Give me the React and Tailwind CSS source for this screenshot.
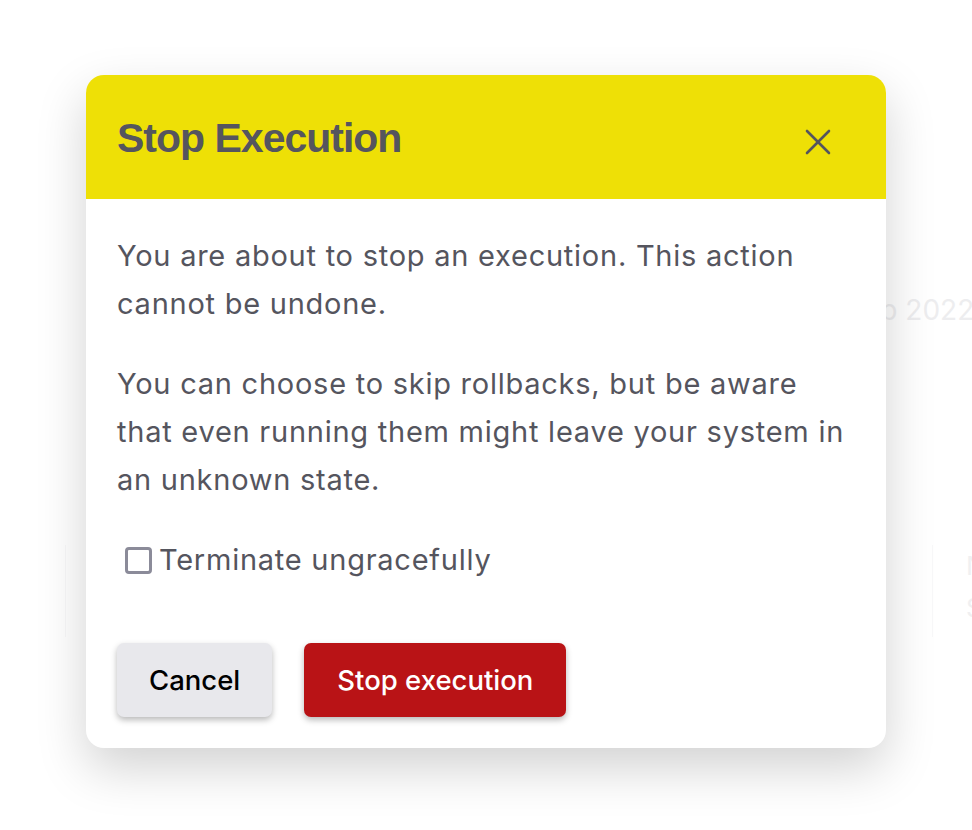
import { useState } from 'react'

function CloseIcon() {
  return (
    <svg width="26" height="26" viewBox="0 0 26 26" fill="none" stroke="currentColor" strokeWidth="2.6" strokeLinecap="round">
      <line x1="2" y1="2" x2="24" y2="24" />
      <line x1="24" y1="2" x2="2" y2="24" />
    </svg>
  )
}

export default function App() {
  const [skipRollbacks, setSkipRollbacks] = useState(false)

  return (
    <div className="relative min-h-screen bg-white overflow-hidden font-['Inter','Noto_Sans',sans-serif]">
      {/* page behind the dialog */}
      <div className="pt-[290px]">
        <div className="ml-[846px] whitespace-nowrap text-[28px] leading-[40px] text-[#e2e2e4]">Sep 2022</div>
        <div className="mt-[215px] ml-[65px] flex whitespace-nowrap">
          <div className="shrink-0 w-[867px] h-[92px] border-l border-[#f4f4f5]" />
          <div className="shrink-0 h-[92px] border-l border-[#f4f4f5] pl-[33px] text-[26px] leading-[42px] text-[#e6e6e8]">
            <div>Name</div>
            <div>Status</div>
          </div>
        </div>
      </div>

      {/* overlay */}
      <div className="absolute inset-0 bg-white/40" />

      {/* dialog */}
      <div className="absolute inset-0 flex items-start justify-center pt-[75px]">
        <div className="w-[800px] bg-white rounded-[18px] shadow-[0_20px_50px_rgba(0,0,0,0.18)] overflow-hidden">
          <div className="h-[124px] bg-[#eee006] flex items-center justify-between pl-[31px] pr-[55px]">
            <h2 className="font-['Liberation_Sans','Arial',sans-serif] font-bold text-[41px] tracking-[-1px] text-[#55555e] mt-[4px]">
              Stop Execution
            </h2>
            <button className="text-[#55555e] mt-[10px]">
              <CloseIcon />
            </button>
          </div>

          <div className="px-[31px] pt-[33px] pb-[31px] text-[29px] tracking-[0.75px] leading-[48px] text-[#55555e]">
            <p>You are about to stop an execution. This action cannot be undone.</p>
            <p className="mt-[32px]">
              You can choose to skip rollbacks, but be aware that even running them might leave your system in an unknown state.
            </p>

            <label className="mt-[32px] flex items-center gap-[7px] pl-[8px] cursor-pointer">
              <span
                onClick={() => setSkipRollbacks(!skipRollbacks)}
                className="w-[27px] h-[27px] rounded-[4px] border-[3px] border-[#8b8b99] bg-white flex items-center justify-center"
              >
                {skipRollbacks && <span className="w-[13px] h-[13px] bg-[#55555e] rounded-[2px]" />}
              </span>
              <span>Terminate ungracefully</span>
            </label>

            <div className="mt-[59px] flex gap-[32px]">
              <button className="h-[74px] px-[32px] rounded-[7px] bg-[#e8e8ec] text-black text-[27.5px] tracking-normal font-medium shadow-[0_3px_6px_rgba(0,0,0,0.28)]">
                Cancel
              </button>
              <button className="h-[74px] px-[33px] rounded-[7px] bg-[#b91316] text-white text-[27.5px] tracking-normal font-medium shadow-[0_3px_6px_rgba(0,0,0,0.28)]">
                Stop execution
              </button>
            </div>
          </div>
        </div>
      </div>
    </div>
  )
}
